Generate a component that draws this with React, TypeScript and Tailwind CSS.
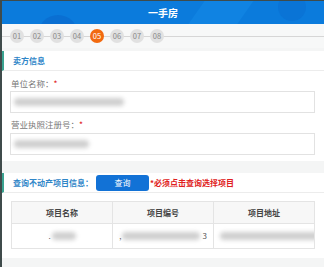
import React from 'react';

const steps = ['01', '02', '03', '04', '05', '06', '07', '08'];
const current = '05';

function Blur({ className }: { className: string }) {
  return <div className={`h-[8px] rounded-full bg-[#cfcfcf] blur-[2px] ${className}`} />;
}

function SectionTitle({ children }: { children: React.ReactNode }) {
  return (
    <div className="flex h-[20px] items-center border-b border-l-2 border-b-[#ececec] border-l-[#3aa391] pl-[9px]">
      {children}
    </div>
  );
}

export default function App() {
  return (
    <div
      className="h-[267px] w-[324px] overflow-hidden border-l-2 border-t border-[#3f4b4b] bg-[#f4f5f5]"
      style={{ fontFamily: '"Noto Sans CJK SC", "Noto Sans", sans-serif' }}
    >
      {/* Header */}
      <div className="relative flex h-[23px] items-center justify-center overflow-hidden bg-[#0b7bdc]">
        <div className="absolute left-[36px] top-[14px] h-[40px] w-[40px] rounded-full bg-[#0a6fd2]" />
        <div className="absolute left-[200px] top-[-20px] h-[60px] w-[40px] rotate-[35deg] bg-[#1387e4] opacity-70" />
        <div className="absolute left-[276px] top-[-8px] h-[28px] w-[28px] rounded-full bg-[#0a74d6]" />
        <span className="relative text-[10px] font-bold text-white">一手房</span>
      </div>

      {/* Steps */}
      <div className="relative flex h-[24px] items-center gap-[6px] bg-[#f7f8f8] pl-[8px]">
        <div className="absolute left-0 right-0 top-[12px] h-px bg-[#d6d6d6]" />
        {steps.map((s) => (
          <div
            key={s}
            className={`relative flex h-[14px] w-[14px] items-center justify-center rounded-full text-[7.5px] ${
              s === current ? 'bg-[#f26a10] text-white' : 'bg-[#e1e1e1] text-[#888]'
            }`}
          >
            {s}
          </div>
        ))}
      </div>

      {/* Seller info */}
      <div className="mt-[3px] bg-white pb-[6px]">
        <SectionTitle>
          <span className="text-[8px] font-bold text-[#2f86c8]">卖方信息</span>
        </SectionTitle>
        <div className="pl-[8px] pr-[9px]">
          <div className="mt-[7px] flex h-[11px] items-center pl-[1px] text-[8.5px] text-[#777]">
            单位名称：<span className="text-[#e02020]">*</span>
          </div>
          <div className="mt-[2px] flex h-[22px] items-center border border-[#e2e2e2] px-[3px]">
            <Blur className="w-[110px]" />
          </div>
          <div className="mt-[6px] flex h-[11px] items-center pl-[1px] text-[8.5px] text-[#777]">
            营业执照注册号：<span className="text-[#e02020]">*</span>
          </div>
          <div className="mt-[3px] flex h-[22px] items-center border border-[#e2e2e2] px-[3px]">
            <Blur className="w-[75px]" />
          </div>
        </div>
      </div>

      {/* Query */}
      <div className="mt-[12px] bg-white pb-[9px]">
        <SectionTitle>
          <span className="text-[8px] font-bold text-[#2f86c8]">查询不动产项目信息：</span>
          <button className="ml-[3px] flex h-[16px] w-[53px] items-center justify-center rounded-[3px] bg-[#1272d6] text-[8px] text-white">
            查询
          </button>
          <span className="ml-[1px] text-[8px] font-semibold text-[#e02020]">*必须点击查询选择项目</span>
        </SectionTitle>
        <div className="ml-[9px] mr-[9px] mt-[8px] border border-[#e4e4e4]">
          <div className="grid h-[21px] grid-cols-[101px_101px_1fr] bg-[#f7f7f7] text-[8px] font-bold text-[#444]">
            <div className="flex items-center justify-center border-r border-[#e4e4e4]">项目名称</div>
            <div className="flex items-center justify-center border-r border-[#e4e4e4]">项目编号</div>
            <div className="flex items-center justify-center">项目地址</div>
          </div>
          <div className="grid h-[25px] grid-cols-[101px_101px_1fr] border-t border-[#e4e4e4] text-[8px] text-[#555]">
            <div className="flex items-center justify-center border-r border-[#e4e4e4]">
              <span className="mr-[1px]">.</span>
              <Blur className="w-[24px]" />
            </div>
            <div className="flex items-center justify-center border-r border-[#e4e4e4]">
              <span className="mr-[1px]">,</span>
              <Blur className="w-[78px]" />
              <span className="ml-[2px]">3</span>
            </div>
            <div className="flex items-center overflow-hidden pl-[6px]">
              <Blur className="w-[100px] shrink-0" />
            </div>
          </div>
        </div>
      </div>
    </div>
  );
}
